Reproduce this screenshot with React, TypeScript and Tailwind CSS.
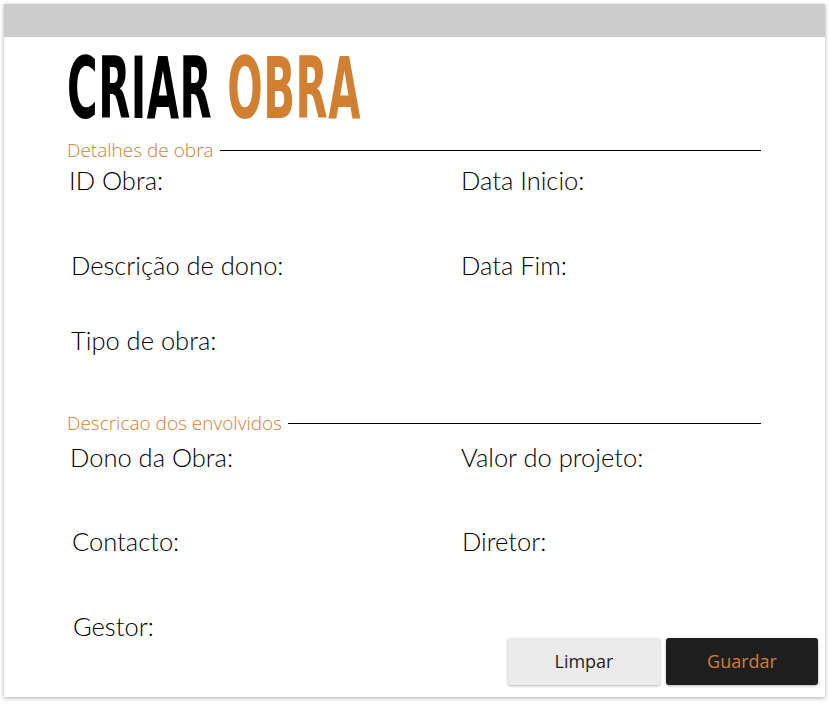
import React from 'react';

const orange = 'text-[#d17f30]';

const Field = ({ label, className = '' }: { label: string; className?: string }) => (
  <div className={`text-[25.5px] leading-none text-black font-light font-['Lato','Noto_Sans',sans-serif] ${className}`}>{label}</div>
);

const SectionTitle = ({ title }: { title: string }) => (
  <div className="flex items-center gap-[6px] pr-[64px]">
    <span className={`text-[19px] leading-none font-['Open_Sans','Noto_Sans',sans-serif] font-light ${orange}`}>{title}</span>
    <div className="h-px flex-1 bg-black" />
  </div>
);

export default function App() {
  return (
    <div className="h-[705px] w-[829px] bg-white p-[4px] pb-[8px]">
      <div className="flex h-full flex-col bg-white shadow-[0_1px_4px_rgba(0,0,0,0.35)]">
        <div className="h-[33px] bg-[#cccccc]" />
        <div className="relative flex flex-1 flex-col pl-[63px]">
          <h1 className="mt-[9px] h-[77px] leading-none">
            <span className="inline-block origin-left scale-x-[0.545] font-['Liberation_Sans_Narrow','DejaVu_Sans_Condensed',sans-serif] text-[85px] font-bold tracking-[1px]">
              CRIAR <span className={orange}>OBRA</span>
            </span>
          </h1>

          <div className="mt-[18px]">
            <SectionTitle title="Detalhes de obra" />
          </div>
          <div className="mt-[8px] grid grid-cols-[394px_1fr] gap-y-[59px]">
            <Field label="ID Obra:" className="pl-[2px]" />
            <Field label="Data Inicio:" />
            <Field label="Descrição de dono:" className="pl-[4px]" />
            <Field label="Data Fim:" />
            <Field label="Tipo de obra:" className="-mt-[9px] pl-[4px]" />
            <div />
          </div>

          <div className="mt-[60px]">
            <SectionTitle title="Descricao dos envolvidos" />
          </div>
          <div className="mt-[12px] grid grid-cols-[394px_1fr] gap-y-[59px]">
            <Field label="Dono da Obra:" className="pl-[3px]" />
            <Field label="Valor do projeto:" />
            <Field label="Contacto:" className="pl-[5px]" />
            <Field label="Diretor:" className="pl-[1px]" />
            <Field label="Gestor:" className="pl-[6px]" />
            <div />
          </div>

          <div className="absolute bottom-[12px] right-[7px] flex gap-[6px] font-['Open_Sans','Noto_Sans',sans-serif] text-[18px]">
            <button className="h-[47px] w-[152px] rounded-[3px] bg-[#ebebeb] text-[#1f1f1f] shadow-[0_1px_3px_rgba(0,0,0,0.3)]">Limpar</button>
            <button className={`h-[47px] w-[152px] rounded-[3px] bg-[#1e1e1e] ${orange} shadow-[0_1px_3px_rgba(0,0,0,0.3)]`}>Guardar</button>
          </div>
        </div>
      </div>
    </div>
  );
}
